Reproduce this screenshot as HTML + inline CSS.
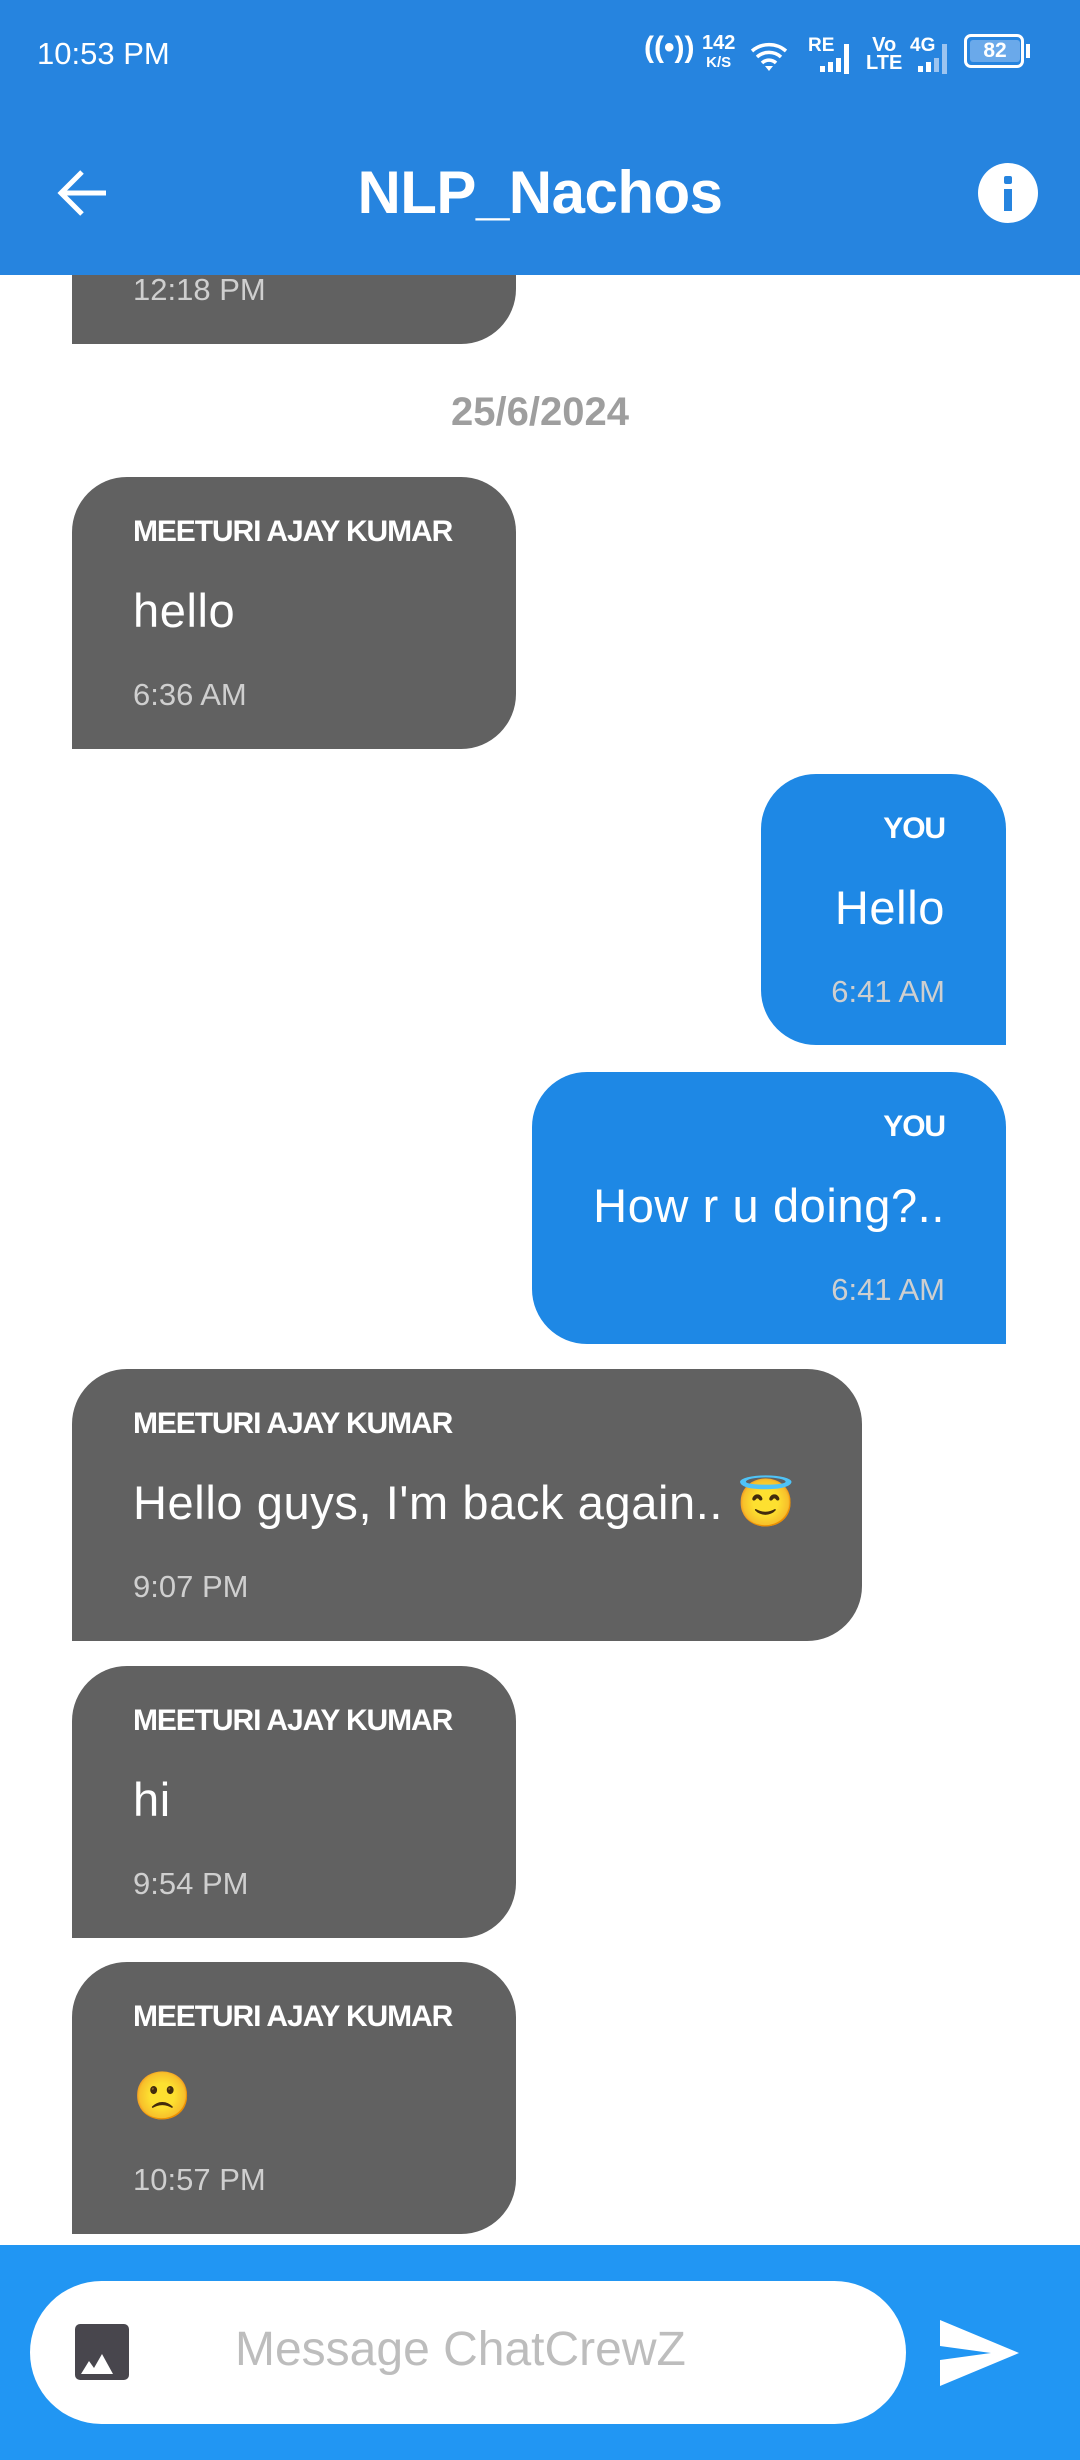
<!DOCTYPE html>
<html><head><meta charset="utf-8"><style>
*{margin:0;padding:0;box-sizing:border-box}
body{width:1080px;height:2460px;background:#fff;font-family:"Liberation Sans",sans-serif;position:relative;overflow:hidden}
.abs{position:absolute}
.hdr{left:0;top:0;width:1080px;height:275px;background:#2684DF;z-index:5}
.b{position:absolute;border-radius:55px}
.g{background:#616161;left:72px;border-bottom-left-radius:0}
.u{background:#1E88E5;right:74px;border-bottom-right-radius:0;text-align:right}
.nm{position:absolute;font-weight:bold;font-size:30px;color:#fff;letter-spacing:-1.1px;line-height:34px;white-space:nowrap}
.ms{position:absolute;font-size:47px;color:#fff;line-height:54px;white-space:nowrap;letter-spacing:0.6px}
.tm{position:absolute;font-size:31px;color:#cfcfcf;line-height:36px}
.g .nm,.g .ms,.g .tm{left:61px}
.u .nm,.u .ms,.u .tm{right:61px}
.nm{top:38px}.ms{top:107px}.tm{top:200px}
</style></head><body>
<div class="abs hdr">
  <div class="abs" style="left:37px;top:36px;font-size:31px;color:#fff">10:53 PM</div>
  <div class="abs" style="left:640px;top:34px;color:#fff;font-size:20px;font-weight:bold;line-height:20px">
    <span class="abs" style="left:4px;top:4px;font-size:30px;white-space:nowrap">((•))</span>
    <span class="abs" style="left:62px;top:0;text-align:center;line-height:18px">142<br><span style="font-size:15px">K/S</span></span>
    <svg class="abs" style="left:110px;top:6px" width="40" height="32" viewBox="0 0 40 32"><path d="M2 11a26 26 0 0 1 34 0M7 17a18 18 0 0 1 24 0M12 23a10 10 0 0 1 14 0" fill="none" stroke="#fff" stroke-width="3.5"/><path d="M15 26l4 5 4-5z" fill="#fff"/></svg>
    <span class="abs" style="left:168px;top:2px;font-size:19px">RE</span>
    <span class="abs" style="left:180px;top:22px;width:32px;height:16px">
      <i style="position:absolute;left:0;bottom:0;width:5px;height:6px;background:#fff"></i><i style="position:absolute;left:8px;bottom:0;width:5px;height:10px;background:#fff"></i><i style="position:absolute;left:16px;bottom:0;width:5px;height:14px;background:#fff"></i><i style="position:absolute;left:24px;bottom:-2px;width:5px;height:30px;background:#fff"></i></span>
    <span class="abs" style="left:226px;top:2px;line-height:18px;text-align:center">Vo<br>LTE</span>
    <span class="abs" style="left:270px;top:2px;font-size:19px">4G</span>
    <span class="abs" style="left:278px;top:22px;width:32px;height:16px">
      <i style="position:absolute;left:0;bottom:0;width:5px;height:6px;background:#fff"></i><i style="position:absolute;left:8px;bottom:0;width:5px;height:10px;background:#fff"></i><i style="position:absolute;left:16px;bottom:0;width:5px;height:14px;background:#9cc4f0"></i><i style="position:absolute;left:24px;bottom:-2px;width:5px;height:30px;background:#9cc4f0"></i></span>
    <span class="abs" style="left:324px;top:0;width:60px;height:34px;border:3px solid #fff;border-radius:7px;"><span style="position:absolute;left:3px;top:3px;width:50px;height:22px;background:#6aa9ea;border-radius:3px;color:#fff;font-size:21px;text-align:center;line-height:22px">82</span></span>
    <span class="abs" style="left:386px;top:10px;width:4px;height:14px;background:#fff"></span>
  </div>
  <svg class="abs" style="left:56px;top:168px" width="54" height="50" viewBox="0 0 54 50"><path d="M50 25H6M26 4L5 25l21 21" fill="none" stroke="#fff" stroke-width="5"/></svg>
  <div class="abs" style="left:0;width:1080px;top:158px;text-align:center;color:#fff;font-weight:bold;font-size:60px;line-height:70px;letter-spacing:-0.5px">NLP_Nachos</div>
  <div class="abs" style="left:978px;top:163px;width:60px;height:60px;border-radius:50%;background:#fff"></div>
  <div class="abs" style="left:1004px;top:176px;width:8px;height:8px;background:#2684DF;border-radius:2px"></div>
  <div class="abs" style="left:1004px;top:189px;width:8px;height:22px;background:#2684DF"></div>
</div>

<div class="b g" style="top:150px;width:444px;height:194px"><div class="tm" style="top:122px">12:18 PM</div></div>
<div class="abs" style="left:0;width:1080px;top:390px;text-align:center;color:#9e9e9e;font-weight:bold;font-size:40px">25/6/2024</div>

<div class="b g" style="top:477px;width:444px;height:272px"><div class="nm">MEETURI AJAY KUMAR</div><div class="ms">hello</div><div class="tm">6:36 AM</div></div>
<div class="b u" style="top:774px;width:245px;height:271px"><div class="nm">YOU</div><div class="ms">Hello</div><div class="tm">6:41 AM</div></div>
<div class="b u" style="top:1072px;width:474px;height:272px"><div class="nm">YOU</div><div class="ms">How r u doing?..</div><div class="tm">6:41 AM</div></div>
<div class="b g" style="top:1369px;width:790px;height:272px"><div class="nm">MEETURI AJAY KUMAR</div><div class="ms">Hello guys, I'm back again.. 😇</div><div class="tm">9:07 PM</div></div>
<div class="b g" style="top:1666px;width:444px;height:272px"><div class="nm">MEETURI AJAY KUMAR</div><div class="ms">hi</div><div class="tm">9:54 PM</div></div>
<div class="b g" style="top:1962px;width:444px;height:272px"><div class="nm">MEETURI AJAY KUMAR</div><div class="ms">🙁</div><div class="tm">10:57 PM</div></div>

<div class="abs" style="left:0;top:2245px;width:1080px;height:215px;background:#2196F3"></div>
<div class="abs" style="left:30px;top:2281px;width:876px;height:143px;background:#fff;border-radius:72px"></div>
<svg class="abs" style="left:75px;top:2324px" width="54" height="56" viewBox="0 0 54 56"><rect x="0" y="0" width="54" height="56" rx="5" fill="#48464d"/><path d="M6 50l8-13 5 7 8-14 11 20z" fill="#fff"/></svg>
<div class="abs" style="left:235px;top:2322px;font-size:48px;color:#bdbdbd;line-height:56px">Message ChatCrewZ</div>
<svg class="abs" style="left:939px;top:2318px" width="82" height="70" viewBox="0 0 82 70"><path d="M1 2L80 35 1 68 1 42 52 35 1 28z" fill="#fff"/></svg>
</body></html>
